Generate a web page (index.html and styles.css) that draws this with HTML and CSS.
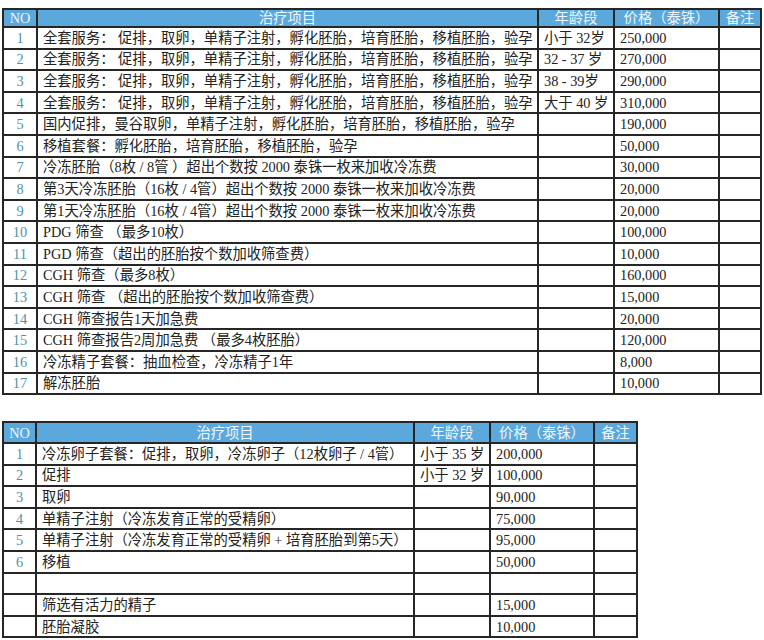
FILE: index.html
```html
<!DOCTYPE html>
<html lang="zh-CN">
<head>
<meta charset="utf-8">
<title>价格表</title>
<link rel="stylesheet" href="styles.css">
</head>
<body>
<div class="page">
<table class="price t1">
  <colgroup>
    <col class="c-no1"><col class="c-item1"><col class="c-age1"><col class="c-price1"><col class="c-note1">
  </colgroup>
  <thead>
    <tr class="head head1"><th>NO</th><th>治疗项目</th><th>年龄段</th><th>价格（泰铢）</th><th>备注</th></tr>
  </thead>
  <tbody>
    <tr><td class="no">1</td><td>全套服务： 促排，取卵，单精子注射，孵化胚胎，培育胚胎，移植胚胎，验孕</td><td>小于 32岁</td><td>250,000</td><td></td></tr>
    <tr><td class="no">2</td><td>全套服务： 促排，取卵，单精子注射，孵化胚胎，培育胚胎，移植胚胎，验孕</td><td>32 - 37 岁</td><td>270,000</td><td></td></tr>
    <tr><td class="no">3</td><td>全套服务： 促排，取卵，单精子注射，孵化胚胎，培育胚胎，移植胚胎，验孕</td><td>38 - 39岁</td><td>290,000</td><td></td></tr>
    <tr><td class="no">4</td><td>全套服务： 促排，取卵，单精子注射，孵化胚胎，培育胚胎，移植胚胎，验孕</td><td>大于 40 岁</td><td>310,000</td><td></td></tr>
    <tr><td class="no">5</td><td>国内促排，曼谷取卵，单精子注射，孵化胚胎，培育胚胎，移植胚胎，验孕</td><td></td><td>190,000</td><td></td></tr>
    <tr><td class="no">6</td><td>移植套餐：孵化胚胎，培育胚胎，移植胚胎，验孕</td><td></td><td>50,000</td><td></td></tr>
    <tr><td class="no">7</td><td>冷冻胚胎（8枚 / 8管 ）超出个数按 2000 泰铢一枚来加收冷冻费</td><td></td><td>30,000</td><td></td></tr>
    <tr><td class="no">8</td><td>第3天冷冻胚胎（16枚 / 4管）超出个数按 2000 泰铢一枚来加收冷冻费</td><td></td><td>20,000</td><td></td></tr>
    <tr><td class="no">9</td><td>第1天冷冻胚胎（16枚 / 4管）超出个数按 2000 泰铢一枚来加收冷冻费</td><td></td><td>20,000</td><td></td></tr>
    <tr><td class="no">10</td><td>PDG 筛查 （最多10枚）</td><td></td><td>100,000</td><td></td></tr>
    <tr><td class="no">11</td><td>PGD 筛查（超出的胚胎按个数加收筛查费）</td><td></td><td>10,000</td><td></td></tr>
    <tr><td class="no">12</td><td>CGH 筛查（最多8枚）</td><td></td><td>160,000</td><td></td></tr>
    <tr><td class="no">13</td><td>CGH 筛查 （超出的胚胎按个数加收筛查费）</td><td></td><td>15,000</td><td></td></tr>
    <tr><td class="no">14</td><td>CGH 筛查报告1天加急费</td><td></td><td>20,000</td><td></td></tr>
    <tr><td class="no">15</td><td>CGH 筛查报告2周加急费 （最多4枚胚胎）</td><td></td><td>120,000</td><td></td></tr>
    <tr><td class="no">16</td><td>冷冻精子套餐：抽血检查，冷冻精子1年</td><td></td><td>8,000</td><td></td></tr>
    <tr><td class="no">17</td><td>解冻胚胎</td><td></td><td>10,000</td><td></td></tr>
  </tbody>
</table>

<table class="price t2">
  <colgroup>
    <col class="c-no2"><col class="c-item2"><col class="c-age2"><col class="c-price2"><col class="c-note2">
  </colgroup>
  <thead>
    <tr class="head head2"><th>NO</th><th>治疗项目</th><th>年龄段</th><th>价格（泰铢）</th><th>备注</th></tr>
  </thead>
  <tbody>
    <tr><td class="no">1</td><td>冷冻卵子套餐：促排，取卵，冷冻卵子（12枚卵子 / 4管）</td><td>小于 35 岁</td><td>200,000</td><td></td></tr>
    <tr><td class="no">2</td><td>促排</td><td>小于 32 岁</td><td>100,000</td><td></td></tr>
    <tr><td class="no">3</td><td>取卵</td><td></td><td>90,000</td><td></td></tr>
    <tr><td class="no">4</td><td>单精子注射（冷冻发育正常的受精卵）</td><td></td><td>75,000</td><td></td></tr>
    <tr><td class="no">5</td><td>单精子注射（冷冻发育正常的受精卵 + 培育胚胎到第5天）</td><td></td><td>95,000</td><td></td></tr>
    <tr><td class="no">6</td><td>移植</td><td></td><td>50,000</td><td></td></tr>
    <tr><td class="no"></td><td></td><td></td><td></td><td></td></tr>
    <tr><td class="no"></td><td>筛选有活力的精子</td><td></td><td>15,000</td><td></td></tr>
    <tr><td class="no"></td><td>胚胎凝胶</td><td></td><td>10,000</td><td></td></tr>
  </tbody>
</table>
</div>
</body>
</html>
```

FILE: styles.css
```css
html, body {
  margin: 0;
  padding: 0;
  background: #ffffff;
}

.page {
  padding: 8px 0 0 2px;
  font-family: "Liberation Serif", "Noto Sans CJK SC", serif;
  font-size: 14.3px;
  color: #222222;
}

.price {
  border-collapse: collapse;
  table-layout: fixed;
  border: 2px solid #262626;
}

.t1 { width: 758px; }
.t2 { width: 634px; margin-top: 26px; }

.c-no1 { width: 34px; }
.c-item1 { width: 501px; }
.c-age1 { width: 76px; }
.c-price1 { width: 105px; }
.c-note1 { width: 42px; }

.c-no2 { width: 33px; }
.c-item2 { width: 378px; }
.c-age2 { width: 76px; }
.c-price2 { width: 104px; }
.c-note2 { width: 43px; }

.price th,
.price td {
  border: 2px solid #262626;
  padding: 0 0 0 5px;
  white-space: nowrap;
  overflow: hidden;
  text-align: left;
  vertical-align: middle;
  line-height: 18px;
}

.price td { height: 19.6px; }

.head th {
  background: #5aa8dc;
  color: #eef6fc;
  font-weight: normal;
  text-align: center;
  padding: 0;
}

.head1 th { height: 16px; line-height: 16px; }
.head2 th { height: 19px; line-height: 18px; }

.price td.no {
  text-align: center;
  padding: 0;
  color: #4d93aa;
}
```
